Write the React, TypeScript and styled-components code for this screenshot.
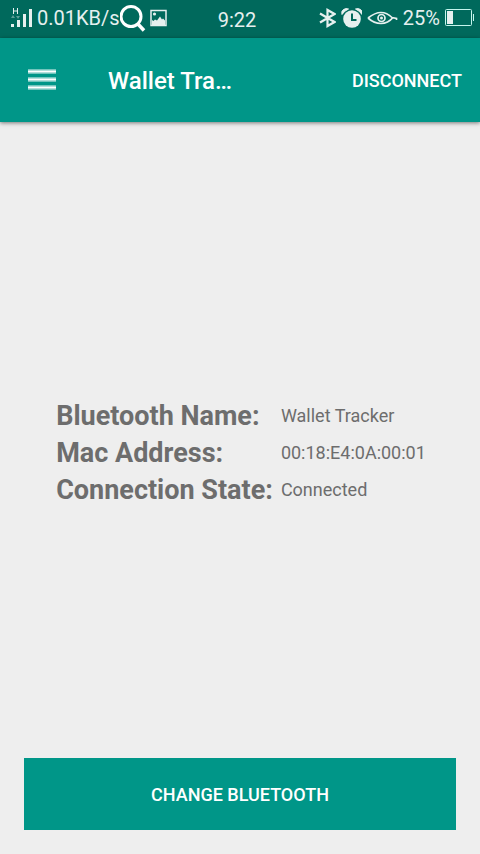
import React from "react";
import styled, { createGlobalStyle } from "styled-components";

const GlobalStyle = createGlobalStyle`
  * { box-sizing: border-box; }
  body {
    margin: 0;
    background: #eeeeee;
    font-family: Roboto, "Liberation Sans", sans-serif;
  }
  button { font-family: inherit; }
`;

const Screen = styled.div`
  display: flex;
  flex-direction: column;
  min-height: 100vh;
  background: #eeeeee;
`;

const StatusBar = styled.div`
  display: grid;
  grid-template-columns: 1fr auto 1fr;
  align-items: center;
  height: 38px;
  padding-right: 6px;
  background: #00695c;
  color: #e6f0ef;
  font-size: 20px;
  line-height: 36px;
  white-space: nowrap;
`;

const StatusGroup = styled.div<{ $end?: boolean }>`
  display: flex;
  align-items: center;
  justify-content: ${(p) => (p.$end ? "flex-end" : "flex-start")};
  gap: ${(p) => (p.$end ? "5px" : "4px")};
  padding-left: ${(p) => (p.$end ? "0" : "10px")};
  padding-bottom: 2px;

  svg { display: block; flex: none; }
`;

const Speed = styled.span`
  display: flex;
  align-items: center;
`;

const Clock = styled.time`
  padding-top: 2px;
`;

const AppBar = styled.header`
  display: flex;
  align-items: center;
  height: 84px;
  padding: 0 18px 0 28px;
  background: #009688;
  color: #ffffff;
  box-shadow: 0 1px 4px rgba(0, 0, 0, 0.5);
`;

const MenuButton = styled.button`
  display: flex;
  padding: 0;
  border: 0;
  background: none;
  color: inherit;
`;

const Title = styled.h1`
  flex: none;
  width: 128px;
  margin: 2px auto 0 52px;
  overflow: hidden;
  text-overflow: ellipsis;
  white-space: nowrap;
  font-size: 24px;
  line-height: 32px;
  font-weight: 500;
`;

const TextButton = styled.button`
  padding: 2px 0 0;
  border: 0;
  background: none;
  color: inherit;
  font-size: 18px;
  line-height: 24px;
  font-weight: 500;
  text-transform: uppercase;
`;

const Content = styled.main`
  flex: 1;
  display: flex;
  align-items: center;
  justify-content: center;
  padding: 24px 0 0 2px;
`;

const Details = styled.dl`
  display: grid;
  grid-template-columns: auto auto;
  column-gap: 8px;
  align-items: center;
  margin: 0;
  color: #6d6d6d;
  line-height: 37px;
`;

const Label = styled.dt`
  padding-top: 2px;
  font-size: 27px;
  line-height: 35px;
  font-weight: 700;
`;

const Value = styled.dd`
  margin: 0;
  font-size: 18px;
`;

const Footer = styled.footer`
  display: flex;
  padding: 0 24px 24px;
`;

const PrimaryButton = styled(TextButton)`
  flex: 1;
  height: 72px;
  background: #009688;
  color: #ffffff;
`;

const details = [
  { label: "Bluetooth Name:", value: "Wallet Tracker" },
  { label: "Mac Address:", value: "00:18:E4:0A:00:01" },
  { label: "Connection State:", value: "Connected" },
];

const SignalIcon = () => (
  <svg width="23" height="20" viewBox="0 0 23 20" fill="#e6f0ef" aria-hidden="true">
    <path d="M1 16h3v3H1zM7 12h3v7H7zM13 6h3v13h-3zM19 1h3v18h-3z" />
    <path d="M1 10l2-3 2 3zM6 8h4l-2 3z" opacity="0.4" />
    <path d="M3.5 0v6M7.500 0v6M3.5 3H7.500" fill="none" stroke="#e6f0ef" />
  </svg>
);

const SearchIcon = () => (
  <svg width="26" height="27" viewBox="0 0 26 27" fill="none" stroke="#ffffff" strokeWidth="3" aria-hidden="true">
    <circle cx="11" cy="11.500" r="10" />
    <path d="M17.500 18.500l6.500 7" strokeWidth="3.5" />
  </svg>
);

const PictureIcon = () => (
  <svg width="17" height="18" viewBox="0 0 17 18" aria-hidden="true">
    <path d="M1 1.500h15v15H1z" fill="none" stroke="#e6f0ef" strokeWidth="1.500" />
    <path d="M2 11l1.500 1L5 10.500l2 1 3-4 2 3 1-1 2 2v5H2z" fill="#e6f0ef" />
    <circle cx="4.500" cy="5" r="1.600" fill="#e6f0ef" />
  </svg>
);

const BluetoothIcon = () => (
  <svg width="18" height="20" viewBox="0 0 18 20" fill="none" stroke="#e6f0ef" strokeWidth="2.200" aria-hidden="true">
    <path d="M2 5.500l14.500 8.500L9.500 18V2L16.500 6 2 14.500" />
  </svg>
);

const AlarmIcon = () => (
  <svg width="21" height="20" viewBox="0 0 21 20" aria-hidden="true">
    <circle cx="11" cy="11" r="8.800" fill="#e6f0ef" />
    <path d="M1 6.500Q0 3 2.500 1.500T7.500 1Q3 3 1 6.500zM21 6.500q1-3.500-1.500-5T14.500 1q4.500 2 6.500 5.500z" fill="#e6f0ef" stroke="#e6f0ef" />
    <path d="M11 5.500V12h4.500" fill="none" stroke="#00695c" strokeWidth="2" />
  </svg>
);

const EyeIcon = () => (
  <svg width="31" height="14" viewBox="0 0 31 14" fill="none" stroke="#e6f0ef" strokeWidth="1.700" aria-hidden="true">
    <path d="M1 7Q8 1.500 14 1.500T25 6.500L29.500 7.500V9M1 7q6 5.500 13 5.500t12-6" />
    <circle cx="14.500" cy="7" r="3.500" />
    <circle cx="14.500" cy="7" r="1.500" fill="#e6f0ef" stroke="none" />
  </svg>
);

const BatteryIcon = () => (
  <svg width="29" height="18" viewBox="0 0 29 18" aria-hidden="true">
    <rect x="0.500" y="0.500" width="26" height="16" rx="1" fill="none" stroke="#c5f5ed" />
    <path d="M2 2h6v13H2z" fill="#e6f0ef" />
    <path d="M28 5h1v7h-1z" fill="#c5f5ed" />
  </svg>
);

const MenuIcon = () => (
  <svg width="28" height="22" viewBox="0 0 28 22" fill="#ffffff" aria-hidden="true">
    <path d="M0 0h28v5H0zM0 8h28v5H0zM0 16h28v5H0z" opacity="0.45" />
    <path d="M0 1h28v3H0zM0 9h28v3H0zM0 17h28v3H0z" opacity="0.45" />
    <path d="M0 2h28v1H0zM0 10h28v1H0zM0 18h28v1H0z" />
  </svg>
);

export default function App() {
  return (
    <>
      <GlobalStyle />
      <Screen>
        <StatusBar>
          <StatusGroup>
            <SignalIcon />
            <Speed>
              0.01KB/s
              <SearchIcon />
            </Speed>
            <PictureIcon />
          </StatusGroup>
          <Clock>9:22</Clock>
          <StatusGroup $end>
            <BluetoothIcon />
            <AlarmIcon />
            <EyeIcon />
            <span>25%</span>
            <BatteryIcon />
          </StatusGroup>
        </StatusBar>
        <AppBar>
          <MenuButton type="button" aria-label="Open menu">
            <MenuIcon />
          </MenuButton>
          <Title>Wallet Tracker</Title>
          <TextButton type="button">Disconnect</TextButton>
        </AppBar>
        <Content>
          <Details>
            {details.map((item) => (
              <React.Fragment key={item.label}>
                <Label>{item.label}</Label>
                <Value>{item.value}</Value>
              </React.Fragment>
            ))}
          </Details>
        </Content>
        <Footer>
          <PrimaryButton type="button">Change Bluetooth</PrimaryButton>
        </Footer>
      </Screen>
    </>
  );
}
